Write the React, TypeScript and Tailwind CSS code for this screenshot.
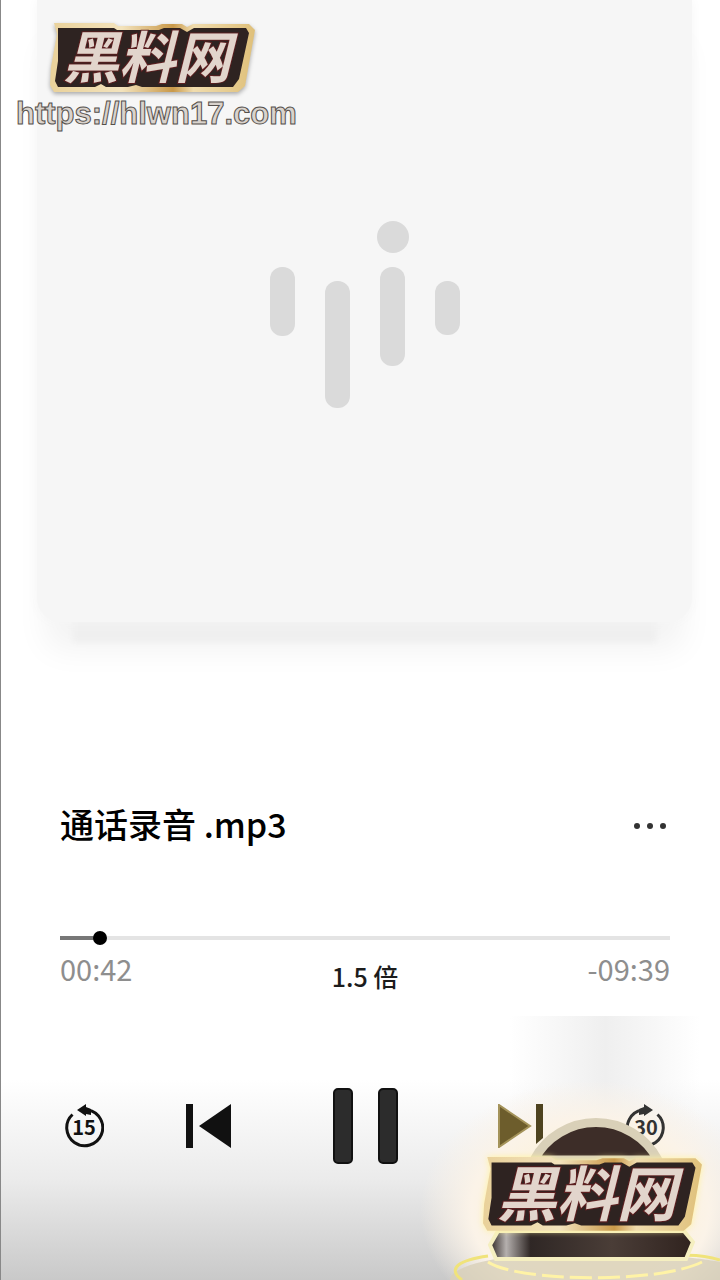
import { useState } from "react";

function Plaque({ className }: { className?: string }) {
  return (
    <svg viewBox="0 0 206 70" overflow="visible" className={className}>
      <defs>
        <linearGradient id="gold" x1="0" y1="0" x2="1" y2="0">
          <stop offset="0" stopColor="#e9d19a" />
          <stop offset="0.35" stopColor="#f3e3bd" />
          <stop offset="0.6" stopColor="#c9994a" />
          <stop offset="0.7" stopColor="#f0dcae" />
          <stop offset="1" stopColor="#dfc07a" />
        </linearGradient>
      </defs>
      <path
        d="M4 1h60l4 3h38l6-2h20l5 3 6-3h56l6 6-10 56-7 6H4l-4-7 1-18L7 12z"
        fill="url(#gold)"
      />
      <path
        d="M8 6h56l3 2h42l5-2h16l7 4 7-4h52l3 5-10 46-6 8H92l-6-2-8 2H56l-5-3-6 3H8l-3-6 3-20z"
        fill="#2e2321"
      />
      <text
        x="97"
        y="56"
        textAnchor="middle"
        fill="#e2d5cc"
        stroke="#5c1f20"
        strokeWidth="2"
        paintOrder="stroke"
        className="font-['Noto_Sans_CJK_SC',sans-serif] text-[56px] font-bold italic"
      >
        黑料网
      </text>
    </svg>
  );
}

function Sticker() {
  return (
    <div className="pointer-events-none absolute right-0 bottom-0 h-[270px] w-[280px]">
      <svg viewBox="0 0 280 270" className="absolute inset-0">
        <defs>
          <linearGradient id="base" x1="0" y1="0" x2="1" y2="0">
            <stop offset="0" stopColor="#2d2522" />
            <stop offset="0.08" stopColor="#b5b0ae" />
            <stop offset="0.2" stopColor="#2f2725" />
            <stop offset="0.6" stopColor="#4a3d37" />
            <stop offset="1" stopColor="#30231f" />
          </linearGradient>
        </defs>
        <path
          d="M10 270C10 254 70 242 150 242s130 10 130 10v18z"
          fill="#d8cfb8"
          opacity="0.8"
        />
        <path
          d="M22 270c-16-12-2-20 26-24M232 246c20-2 36 0 48 4"
          fill="none"
          stroke="#f0e37a"
          strokeWidth="3"
        />
        <path
          d="M48 252c30 20 170 22 214 0"
          fill="none"
          stroke="#fff3a6"
          strokeWidth="3"
          strokeDasharray="22 6"
        />
        <path
          d="M94 150A70 70 0 0 1 218 150z"
          fill="#3d2d28"
          stroke="#d9d0b8"
          strokeWidth="9"
        />
        <path
          d="M58 221h186l9 11-7 17H56l-6-14z"
          fill="url(#base)"
          stroke="#f5efc0"
          strokeWidth="4"
        />
      </svg>
      <Plaque className="absolute top-[146px] left-[43px] w-[220px] drop-shadow-[0_0_3px_#fff3a0]" />
    </div>
  );
}

function SkipIcon({ seconds, forward }: { seconds: number; forward?: boolean }) {
  return (
    <svg viewBox="0 0 40 44" className="h-11 w-10">
      <g transform={forward ? "matrix(-1 0 0 1 40 0)" : undefined}>
        <path
          d="M8.5 10.5A18 18 0 1 0 24 6"
          fill="none"
          stroke="currentColor"
          strokeWidth="3"
        />
        <path d="M13 6l9-6v3l5 2v6l-5-1v2z" fill="currentColor" />
      </g>
      <text
        x="20"
        y="31"
        textAnchor="middle"
        fill="currentColor"
        className="font-['Noto_Sans_CJK_SC',sans-serif] text-[20px] font-bold"
      >
        {seconds}
      </text>
    </svg>
  );
}

function PrevIcon() {
  return (
    <svg viewBox="0 0 46 44" className="h-11 w-[46px]" fill="currentColor">
      <path d="M0 0h7v44H0zM45 0v44L13 22z" />
    </svg>
  );
}

function NextIcon() {
  return (
    <svg viewBox="0 0 46 44" className="h-11 w-[46px]">
      <path d="M1 1v42l31-21z" fill="#6d5d2c" stroke="#a4935a" strokeWidth="2" />
      <path d="M38 0h7v34l-7 6z" fill="#4e431f" />
    </svg>
  );
}

export default function App() {
  const [position, setPosition] = useState(34);

  return (
    <main className="relative flex min-h-screen flex-col overflow-hidden border-l border-[#888888] bg-white font-['Noto_Sans_CJK_SC',sans-serif] text-black">
      <div className="absolute inset-x-0 bottom-0 h-[200px] bg-linear-to-b from-white via-[#ebebeb] to-[#c9c9c9]" />
      <div className="absolute right-5 bottom-0 h-[264px] w-[190px] bg-linear-to-r from-white/0 via-[#efefef] to-white/0" />
      <div className="absolute -right-10 bottom-[-60px] h-[260px] w-[340px] bg-radial-[closest-side] from-[#fff0c4] via-[#fbf3e8] via-70% to-[#fbf3e8]/0" />

      <section className="mr-7 ml-9 flex h-[622px] items-center justify-center rounded-b-3xl bg-[#f6f6f6] pt-2 shadow-[0_0_12px_#f6f6f6,0_56px_6px_-36px_#efefef,0_36px_32px_-8px_#f3f3f3]">
        <svg viewBox="0 0 192 188" className="h-[188px] w-48" fill="#dadada">
          <rect x="1" y="46" width="25" height="69" rx="12" />
          <rect x="56" y="60" width="25" height="127" rx="12" />
          <rect x="111" y="46" width="25" height="99" rx="12" />
          <rect x="166" y="60" width="25" height="54" rx="12" />
          <circle cx="124" cy="16" r="16" />
        </svg>
      </section>

      <section className="relative mt-[174px] px-[50px] pl-[59px]">
        <div className="flex h-14 items-center justify-between">
          <h1 className="text-[34px] leading-[56px] font-medium">
            通话录音 .mp3
          </h1>
          <button aria-label="更多" className="mt-1 mr-1 flex gap-[7px]">
            <span className="size-1.5 rounded-full bg-[#333333]" />
            <span className="size-1.5 rounded-full bg-[#333333]" />
            <span className="size-1.5 rounded-full bg-[#333333]" />
          </button>
        </div>
        <input
          type="range"
          aria-label="播放进度"
          min={0}
          max={621}
          value={position}
          onChange={(e) => setPosition(Number(e.target.value))}
          className="mt-[78px] block h-4 w-full appearance-none bg-[linear-gradient(to_right,#777777_6%,#e4e4e4_6%)] bg-size-[100%_4px] bg-center bg-no-repeat [&::-webkit-slider-thumb]:size-3.5 [&::-webkit-slider-thumb]:appearance-none [&::-webkit-slider-thumb]:rounded-full [&::-webkit-slider-thumb]:bg-black"
        />
        <div className="mt-0.5 grid grid-cols-3 items-start text-[29px] leading-10 text-[#8e8e8e]">
          <span>00:42</span>
          <button className="mt-2 text-[25px] font-medium text-[#1c1c1c]">
            1.5 倍
          </button>
          <span className="text-right">-09:39</span>
        </div>
      </section>

      <section className="relative mt-[92px] flex items-center justify-between pr-[54px] pl-[63px] text-[#111111]">
        <button aria-label="后退15秒">
          <SkipIcon seconds={15} />
        </button>
        <button aria-label="上一首">
          <PrevIcon />
        </button>
        <button aria-label="暂停" className="flex gap-[25px] px-[18px]">
          <span className="h-[76px] w-5 rounded-[5px] border-2 border-[#111111] bg-[#2c2c2c]" />
          <span className="h-[76px] w-5 rounded-[5px] border-2 border-[#111111] bg-[#2c2c2c]" />
        </button>
        <button aria-label="下一首">
          <NextIcon />
        </button>
        <button aria-label="前进30秒" className="text-[#333333]">
          <SkipIcon seconds={30} forward />
        </button>
      </section>

      <Sticker />

      <div className="absolute top-[22px] left-[15px]">
        <Plaque className="ml-[34px] w-[206px] drop-shadow-[0_2px_2px_#00000050]" />
        <a
          href="https://hlwn17.com"
          className="block font-['Liberation_Sans',sans-serif] text-[31px] leading-[44px] font-bold text-[#d9d3cd] [-webkit-text-stroke:1px_#55504c]"
        >
          https://hlwn17.com
        </a>
      </div>
    </main>
  );
}
